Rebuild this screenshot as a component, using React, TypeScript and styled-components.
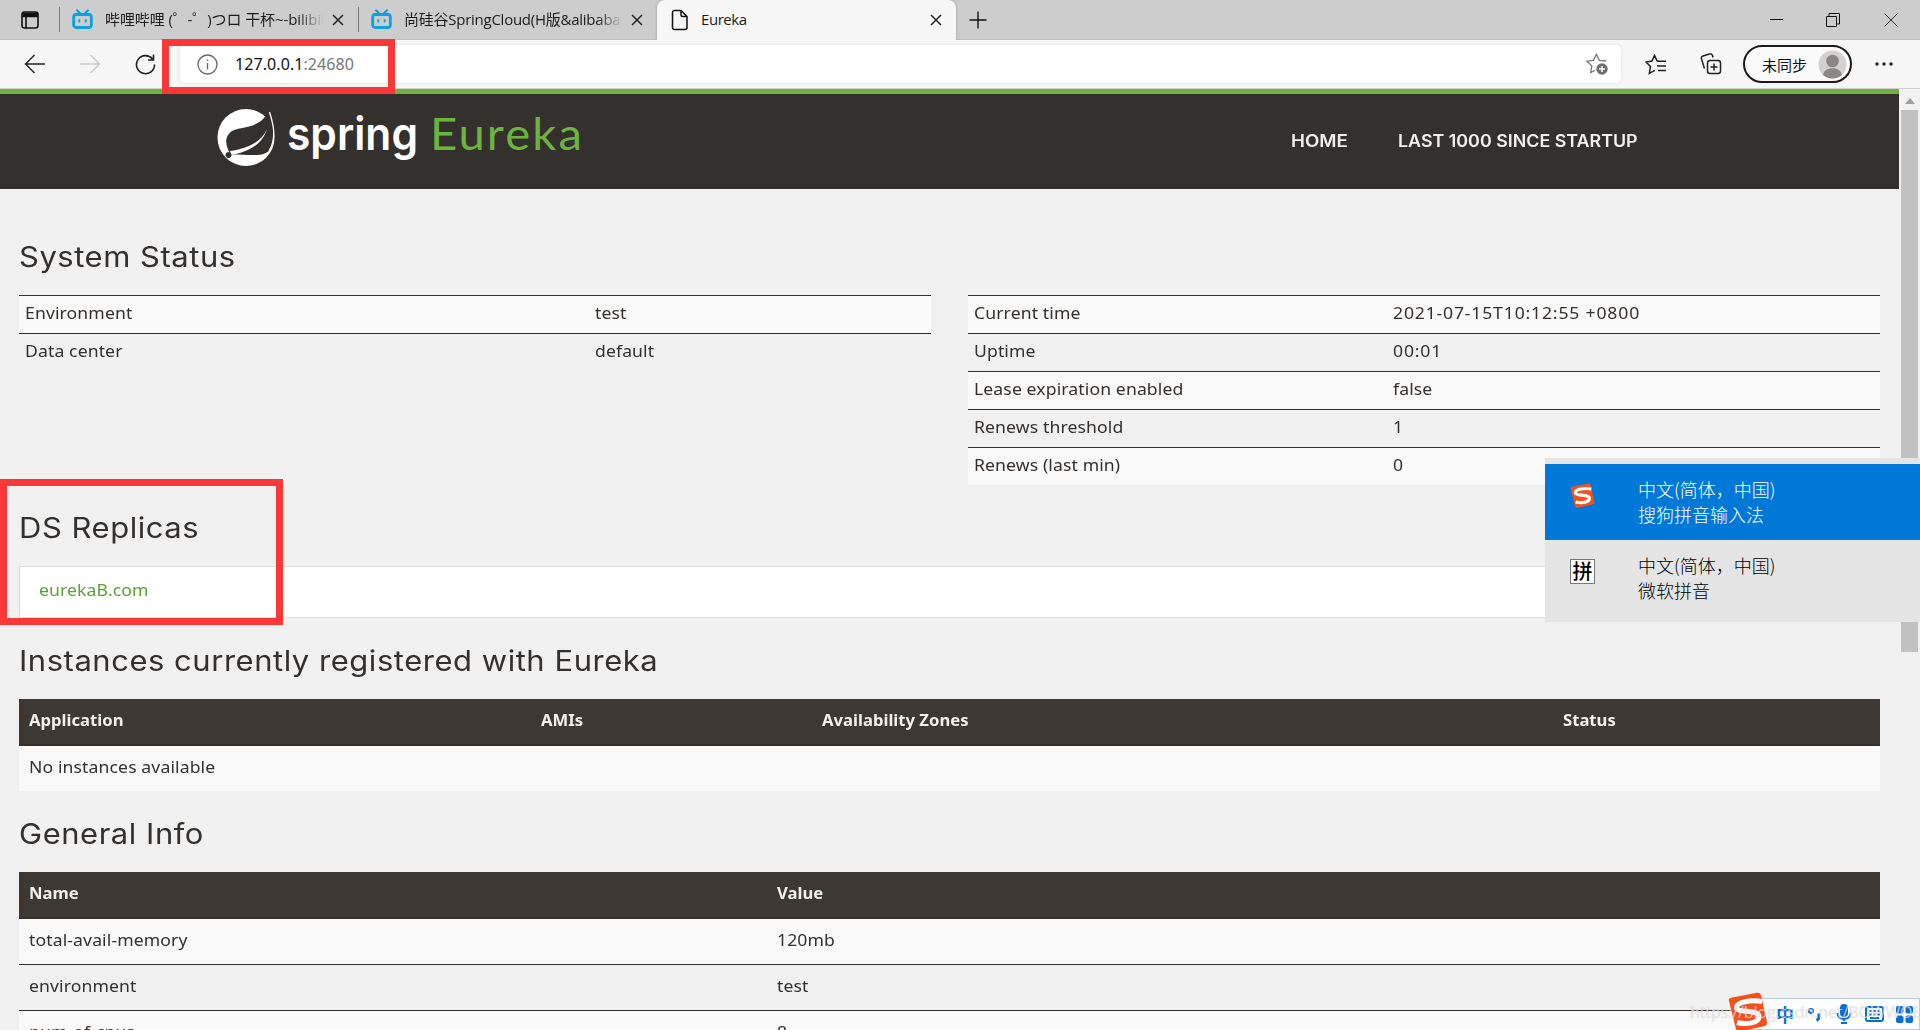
import React from "react";
import styled, { createGlobalStyle } from "styled-components";

const GlobalStyle = createGlobalStyle`
  * { box-sizing: border-box; }
  body { margin: 0; background: #f1f1f1; overflow: hidden; }
`;

const ui = `"Open Sans", "Noto Sans CJK SC", sans-serif`;
const bodyFont = `"Noto Sans", "Open Sans", sans-serif`;
const titleFont = `Inter, "Noto Sans", sans-serif`;

const Window = styled.div`
  position: relative;
  width: 1920px;
  height: 1030px;
  overflow: hidden;
  display: flex;
  flex-direction: column;
  background: #f1f1f1;
  color: #34302d;
  font-family: ${bodyFont};
`;

/* ---------- browser chrome ---------- */
const TabStrip = styled.div`
  height: 40px;
  flex: none;
  display: flex;
  align-items: center;
  background: #cdcdcd;
  border-bottom: 1px solid #bdbdbd;
  font: 15px ${ui};
  color: #1b1b1b;
`;
const StripIcon = styled.div<{ $w: number }>`
  width: ${(p) => p.$w}px;
  display: flex;
  justify-content: center;
`;
const Tab = styled.div<{ $active?: boolean; $w: number }>`
  width: ${(p) => p.$w}px;
  height: 40px;
  padding: 0 14px 0 ${(p) => (p.$active ? 14 : 12)}px;
  display: flex;
  align-items: center;
  background: ${(p) => (p.$active ? "#f7f7f7" : "transparent")};
  border-radius: ${(p) => (p.$active ? "8px 8px 0 0" : "0")};
  box-shadow: ${(p) => (p.$active ? "0 0 3px rgba(0,0,0,.25)" : "none")};
`;
const Divider = styled.div`
  width: 1px;
  height: 25px;
  background: #7d7d7d;
`;
const TabTitle = styled.div<{ $ls?: number; $fade?: boolean }>`
  flex: 1;
  min-width: 0;
  height: 24px;
  line-height: 22px;
  margin: 0 8px 0 12px;
  overflow: hidden;
  white-space: pre;
  letter-spacing: ${(p) => p.$ls ?? -0.45}px;
  ${(p) => p.$fade && `-webkit-mask-image: linear-gradient(90deg, #000 88%, transparent);`}
`;
const Controls = styled.div`
  margin-left: auto;
  width: 172px;
  height: 37px;
  display: flex;
  align-items: center;
  justify-content: space-around;
`;
const Toolbar = styled.div`
  height: 49px;
  flex: none;
  display: flex;
  align-items: center;
  background: #f7f7f7;
  border-bottom: 1px solid #cfcfcf;
  padding-left: 8px;
`;
const ToolButton = styled.div<{ $w: number }>`
  width: ${(p) => p.$w}px;
  flex: none;
  display: flex;
  justify-content: center;
`;
const Address = styled.div`
  width: 1441px;
  height: 38px;
  margin-left: 7px;
  padding: 0 13px 0 17px;
  display: flex;
  align-items: center;
  background: #fff;
  border-radius: 5px;
  box-shadow: 0 0 4px rgba(0, 0, 0, 0.09);
`;
const Url = styled.div`
  flex: 1;
  margin-left: 17px;
  font: 16px ${bodyFont};
  letter-spacing: 0.08px;
  color: #111;
  span { color: #767676; }
`;
const Profile = styled.div`
  width: 109px;
  height: 38px;
  margin: 0 8px 0 11px;
  padding: 0 3px 0 17px;
  display: flex;
  align-items: center;
  justify-content: space-between;
  border: 2px solid #1b1b1b;
  border-radius: 19px;
  background: #fbfbfb;
  font: 15px ${ui};
  color: #111;
`;

/* ---------- page ---------- */
const Viewport = styled.div`
  flex: 1;
  min-height: 0;
  display: flex;
`;
const Page = styled.div`
  width: 1899px;
  overflow: hidden;
`;
const Scrollbar = styled.div`
  width: 21px;
  display: flex;
  flex-direction: column;
  align-items: center;
  background: #f1f1f1;
  padding-top: 9px;
`;
const Thumb = styled.div`
  width: 17px;
  height: 542px;
  margin-top: 6px;
  background: #c1c1c1;
`;
const Header = styled.header`
  height: 100px;
  border-top: 5px solid #6db33f;
  background: #34302d;
  display: flex;
`;
const LogoBox = styled.div`
  width: 400px;
  margin-left: 200px;
`;
const Nav = styled.nav`
  display: flex;
  gap: 55px;
  margin-left: 691px;
  padding-top: 35px;
  font: 600 17px/24px ${titleFont};
  color: #f1f1f1;
`;
const NavLink = styled.a<{ $stretch: number }>`
  transform: scaleX(${(p) => p.$stretch});
  transform-origin: left;
  white-space: nowrap;
`;
const Content = styled.main`
  padding: 0 19px;
`;
const Title = styled.h1<{ $top?: number }>`
  margin: ${(p) => p.$top ?? 27}px 0 22px;
  font: 400 28px/32px ${titleFont};
  letter-spacing: 0.5px;
  white-space: nowrap;
  transform: scaleX(1.105);
  transform-origin: left;
`;
const Columns = styled.div`
  display: grid;
  grid-template-columns: 912px 912px;
  gap: 37px;
  align-items: start;
`;
const StatusTable = styled.div`
  border-top: 1px solid #34302d;
`;
const StatusRow = styled.div<{ $col: number }>`
  height: 38px;
  display: grid;
  grid-template-columns: ${(p) => p.$col}px 1fr;
  padding-left: 6px;
  font-size: 16px;
  line-height: 35px;
  border-bottom: 1px solid #34302d;
  &:nth-child(odd) { background: #f9f9f9; }
  &:last-child { border-bottom: 0; height: 37px; }
`;
const Text = styled.span<{ $ls?: number; $stretch?: number }>`
  display: block;
  justify-self: start;
  letter-spacing: ${(p) => p.$ls ?? 0.1}px;
  white-space: nowrap;
  transform: scaleX(${(p) => p.$stretch ?? 1.1});
  transform-origin: left;
`;
const List = styled.div`
  height: 52px;
  padding-left: 19px;
  border: 1px solid #ddd;
  background: #fff;
  font-size: 16px;
  line-height: 46px;
  color: #5fa134;
`;
const Table = styled.div<{ $cols: string }>`
  & > div {
    display: grid;
    grid-template-columns: ${(p) => p.$cols};
    padding-left: 10px;
  }
`;
const HeadRow = styled.div`
  height: 47px;
  background: #3d3833;
  border-bottom: 2px solid #34302d;
  color: #f1f1f1;
  font-weight: 700;
  font-size: 16px;
  line-height: 43px;
`;
const DataRow = styled.div<{ $line?: boolean; $alt?: boolean }>`
  height: ${(p) => (p.$line ? 46 : 45)}px;
  background: ${(p) => (p.$alt ? "#f1f1f1" : "#f9f9f9")};
  border-bottom: ${(p) => (p.$line ? "1px solid #34302d" : "0")};
  font-size: 16px;
  line-height: 43px;
`;

/* ---------- overlays ---------- */
const Marker = styled.div<{ $x: number; $y: number; $w: number; $h: number }>`
  position: absolute;
  left: ${(p) => p.$x}px;
  top: ${(p) => p.$y}px;
  width: ${(p) => p.$w}px;
  height: ${(p) => p.$h}px;
  border: 7px solid #fb3838;
`;
const ImeMenu = styled.div`
  position: absolute;
  left: 1545px;
  top: 458px;
  width: 375px;
  height: 164px;
  padding-top: 6px;
  background: #e5e5e5;
`;
const ImeItem = styled.div<{ $on?: boolean }>`
  height: 76px;
  padding: 13px 0 0 25px;
  display: flex;
  gap: 43px;
  background: ${(p) => (p.$on ? "#0078d7" : "transparent")};
  color: ${(p) => (p.$on ? "#fff" : "#000")};
  font: 300 18px/25px "Noto Sans CJK SC", sans-serif;
  svg { margin-top: 6px; }
`;
const PinyinIcon = styled.div`
  width: 25px;
  height: 25px;
  margin-top: 6px;
  border: 1px solid #777;
  background: #fff;
  font: 500 20px/21px "Noto Sans CJK SC", sans-serif;
  text-align: center;
`;
const ImeBar = styled.div`
  position: absolute;
  left: 1740px;
  top: 998px;
  width: 180px;
  height: 32px;
  padding-left: 29px;
  display: flex;
  align-items: center;
  border: 1px solid #b9cbe6;
  background: #fff;
`;
const ImeLogo = styled.div`
  position: absolute;
  left: 1728px;
  top: 992px;
`;
const ImeCell = styled.div`
  width: 30px;
  display: flex;
  justify-content: center;
  color: #0b6cd6;
  font: 700 18px/24px "Noto Sans CJK SC", sans-serif;
`;
const Watermark = styled.div`
  position: absolute;
  left: 1690px;
  top: 1001px;
  font: 16px/22px ${ui};
  color: rgba(255, 255, 255, 0.6);
  text-shadow: 0 0 1px rgba(120, 120, 120, 0.45);
  letter-spacing: -0.1px;
  white-space: nowrap;
`;

const Close = () => (
  <svg width="12" height="12" viewBox="0 0 12 12" stroke="#222" strokeWidth="1.5"><path d="M1 1l10 10M11 1L1 11" /></svg>
);
const Bili = () => (
  <svg width="21" height="23" viewBox="0 -1 21 22" fill="none" stroke="#0ba2de" strokeLinecap="round">
    <rect x="1.7" y="5" width="17.6" height="13" rx="2.5" strokeWidth="2.8" />
    <path d="M5 .8l3 3M16 .8l-3 3" strokeWidth="2.2" />
    <path d="M7.3 10.500v1.500M13.7 10.500v1.500" strokeWidth="2" />
  </svg>
);
const SogouIcon = ({ size }: { size: number }) => (
  <svg width={size} height={size} viewBox="0 0 40 40">
    <path d="M1 9Q0 6.500 3 5.800L29 .8Q32 .3 33 3L39 30Q39.800 33 37 34L12 39.500Q9 40 8 37Z" fill="#f4511e" />
    <path d="M34 9.500C23 7.500 8.500 10 8.500 15.500C8.500 21.500 31 17 31 24.500C31 31 19 33 9 30.500" fill="none" stroke="#fff" strokeWidth="5" />
  </svg>
);

const Logo = () => (
  <svg width="400" height="95" viewBox="0 0 400 95">
    <circle cx="46" cy="43.500" r="28.500" fill="#fff" />
    <path d="M69 17C74 29 75.500 44 71 54C66 63 56 61 31 60.500C25 53 24 42 32 37C40 32 59 36 69 17Z" fill="#34302d" />
    <path d="M69.500 18C74 32 76.500 45 69 57" stroke="#fff" strokeWidth="1.300" fill="none" />
    <path d="M31 61C48 58 62 51 67 35C62 47 48 55 30 57Z" fill="#fff" />
    <circle cx="28.500" cy="61" r="2.600" fill="#34302d" stroke="#34302d" strokeWidth="1" />
    <text x="87" y="56" fill="#fff" fontFamily="Inter" fontWeight="600" fontSize="46" textLength="131" lengthAdjust="spacingAndGlyphs">spring</text>
    <text x="230" y="56" fill="#6db33f" fontFamily="Lato" fontWeight="400" fontSize="44" letterSpacing="2" textLength="154" lengthAdjust="spacingAndGlyphs">Eureka</text>
  </svg>
);

const left = [["Environment", "test"], ["Data center", "default"]];
const right: [string, string, number?][] = [
  ["Current time", "2021-07-15T10:12:55 +0800", 0.75],
  ["Uptime", "00:01", 0.75],
  ["Lease expiration enabled", "false"],
  ["Renews threshold", "1"],
  ["Renews (last min)", "0"],
];
const info = [["total-avail-memory", "120mb"], ["environment", "test"], ["num-of-cpus", "8"]];

export default function App() {
  return (
    <Window>
      <GlobalStyle />
      <TabStrip>
        <StripIcon $w={59}>
          <svg width="18" height="18" viewBox="0 0 18 18" fill="none" stroke="#111" strokeWidth="1.600">
            <rect x="1" y="1" width="16" height="16" rx="2.500" /><path d="M1 4h16" strokeWidth="4.500" /><path d="M5 5v12" />
          </svg>
        </StripIcon>
        <Divider />
        <Tab $w={298}><Bili /><TabTitle $fade $ls={-0.1}>哔哩哔哩 (゜-゜)つロ 干杯~-bilibili</TabTitle><Close /></Tab>
        <Divider />
        <Tab $w={298}><Bili /><TabTitle $fade $ls={-0.25}>尚硅谷SpringCloud(H版&amp;alibaba)</TabTitle><Close /></Tab>
        <Tab $w={299} $active>
          <svg width="18" height="22" viewBox="0 0 18 22" fill="none" stroke="#111" strokeWidth="1.500">
            <path d="M3.500 1.500H10L16 7.500V18.500a2 2 0 0 1-2 2H3.500a2 2 0 0 1-2-2V3.500a2 2 0 0 1 2-2ZM10 1.500V6a1.500 1.500 0 0 0 1.500 1.500H16" />
          </svg>
          <TabTitle>Eureka</TabTitle><Close />
        </Tab>
        <StripIcon $w={44}>
          <svg width="18" height="18" viewBox="0 0 18 18" stroke="#111" strokeWidth="1.400"><path d="M9 .5v17M.5 9h17" /></svg>
        </StripIcon>
        <Controls>
          <svg width="13" height="13" stroke="#111"><path d="M0 6.500h13" /></svg>
          <svg width="14" height="14" fill="none" stroke="#111"><path d="M.5 3.500h10v10H.5zM3 3.500V.5h10.500v10.500H11" /></svg>
          <svg width="14" height="14" stroke="#333"><path d="M.5 .5l13 13M13.500 .5l-13 13" /></svg>
        </Controls>
      </TabStrip>

      <Toolbar>
        <ToolButton $w={54}>
          <svg width="22" height="20" viewBox="0 0 22 20" fill="none" stroke="#222" strokeWidth="1.500"><path d="M10.500 1L1.500 10l9 9M1.500 10H21" /></svg>
        </ToolButton>
        <ToolButton $w={56}>
          <svg width="22" height="20" viewBox="0 0 22 20" fill="none" stroke="#ccc" strokeWidth="1.500"><path d="M11.500 1L20.500 10l-9 9M20.500 10H1" /></svg>
        </ToolButton>
        <ToolButton $w={55}>
          <svg width="21" height="21" viewBox="0 0 21 21" fill="none" stroke="#222" strokeWidth="1.600"><path d="M17.500 5A9 9 0 1 0 19.500 10.500M18.500 .5V6H13" /></svg>
        </ToolButton>
        <Address>
          <svg width="21" height="21" viewBox="0 0 21 21" fill="none" stroke="#666" strokeWidth="1.300"><circle cx="10.500" cy="10.500" r="9.500" /><path d="M10.500 9v6.500M10.500 5.500v1.600" /></svg>
          <Url>127.0.0.1<span>:24680</span></Url>
          <svg width="22" height="22" viewBox="0 0 22 22" fill="none" stroke="#777" strokeWidth="1.300">
            <path d="M20 8L13.300 7.300 10.400 1.300 7.500 7.300 1 8.200l4.800 4.700L4.700 19.500 9 17.200" />
            <circle cx="16" cy="16" r="5.700" fill="#6e6e6e" stroke="none" /><path d="M16 13v6M13 16h6" stroke="#fff" strokeWidth="1.500" />
          </svg>
        </Address>
        <ToolButton $w={69}>
          <svg width="22" height="21" viewBox="0 0 22 21" fill="none" stroke="#222" strokeWidth="1.500">
            <path d="M14 7.200L12 6.800 9.500 1.300 7 7 1 8l4.500 4.500L4.300 19.300 9.800 16.300M13 7.300h8M12 12h9M13 16.500h8" />
          </svg>
        </ToolButton>
        <ToolButton $w={42}>
          <svg width="22" height="22" viewBox="0 0 22 22" fill="none" stroke="#222" strokeWidth="1.500">
            <rect x="7.500" y="7.500" width="13" height="13" rx="2.500" /><path d="M14 10.500v7M10.500 14h7M4.500 15.500L1.500 6a2.300 2.300 0 0 1 1.500-3L9.500 1a2.300 2.300 0 0 1 3 1.500L13 4.500" />
          </svg>
        </ToolButton>
        <Profile>
          未同步
          <svg width="29" height="29" viewBox="0 0 29 29"><circle cx="14.500" cy="14.500" r="14" fill="#d4d1ce" /><circle cx="14.500" cy="11" r="6.300" fill="#8a8785" /><path d="M5 25c1-9 18-9 19 0-5 4.500-14 4.500-19 0Z" fill="#8a8785" /></svg>
        </Profile>
        <ToolButton $w={48}>
          <svg width="18" height="4" fill="#222"><circle cx="2" cy="2" r="1.700" /><circle cx="9" cy="2" r="1.700" /><circle cx="16" cy="2" r="1.700" /></svg>
        </ToolButton>
      </Toolbar>

      <Viewport>
        <Page>
          <Header>
            <LogoBox><Logo /></LogoBox>
            <Nav><NavLink $stretch={1.1}>HOME</NavLink><NavLink $stretch={1.05}>LAST 1000 SINCE STARTUP</NavLink></Nav>
          </Header>
          <Content>
            <Title $top={52}>System Status</Title>
            <Columns>
              <StatusTable>
                {left.map(([a, b]) => <StatusRow key={a} $col={570}><Text>{a}</Text><Text>{b}</Text></StatusRow>)}
              </StatusTable>
              <StatusTable>
                {right.map(([a, b, ls]) => <StatusRow key={a} $col={419}><Text>{a}</Text><Text $ls={ls}>{b}</Text></StatusRow>)}
              </StatusTable>
            </Columns>
            <Title>DS Replicas</Title>
            <List><Text>eurekaB.com</Text></List>
            <Title>Instances currently registered with Eureka</Title>
            <Table $cols="512px 281px 741px 1fr">
              <HeadRow>
                {["Application", "AMIs", "Availability Zones", "Status"].map((h) => <Text key={h} $ls={0} $stretch={1.04}>{h}</Text>)}
              </HeadRow>
              <DataRow><Text>No instances available</Text></DataRow>
            </Table>
            <Title>General Info</Title>
            <Table $cols="748px 1fr">
              <HeadRow><Text $ls={0} $stretch={1.04}>Name</Text><Text $ls={0} $stretch={1.04}>Value</Text></HeadRow>
              {info.map(([a, b], i) => <DataRow key={a} $line $alt={i % 2 === 1}><Text>{a}</Text><Text>{b}</Text></DataRow>)}
            </Table>
          </Content>
        </Page>
        <Scrollbar>
          <svg width="10" height="6" fill="#a0a0a0"><path d="M5 0l5 6H0z" /></svg>
          <Thumb />
        </Scrollbar>
      </Viewport>

      <Marker $x={162} $y={39} $w={233} $h={55} />
      <Marker $x={0} $y={479} $w={283} $h={146} />
      <ImeMenu>
        <ImeItem $on><SogouIcon size={25} /><div>中文(简体，中国)<br />搜狗拼音输入法</div></ImeItem>
        <ImeItem><PinyinIcon>拼</PinyinIcon><div>中文(简体，中国)<br />微软拼音</div></ImeItem>
      </ImeMenu>
      <ImeBar>
        <ImeCell>中</ImeCell>
        <ImeCell><svg width="16" height="16" fill="none" stroke="#0b6cd6" strokeWidth="2"><circle cx="4" cy="5" r="2" /><path d="M12 7.500v3.500q0 2-2.500 3.500" strokeWidth="3" /></svg></ImeCell>
        <ImeCell><svg width="16" height="20" viewBox="0 0 16 20" fill="none" stroke="#0b6cd6" strokeWidth="2"><rect x="5" y="1" width="6" height="11" rx="3" fill="#0b6cd6" /><path d="M1.500 9c0 8 13 8 13 0M8 15v2M5 19h6" /></svg></ImeCell>
        <ImeCell><svg width="19" height="16" viewBox="0 0 19 16" fill="none" stroke="#0b6cd6" strokeWidth="2"><rect x="1" y="1" width="17" height="14" rx="2" /><path d="M4 5h11M4 8.500h11" strokeDasharray="2.500 1.700" /><path d="M5 12h9" /></svg></ImeCell>
        <ImeCell><svg width="17" height="17" viewBox="0 0 17 17" fill="#0b6cd6"><rect width="7.500" height="7.500" rx="2" /><rect x="9.500" width="7.500" height="7.500" rx="2" /><rect y="9.500" width="7.500" height="7.500" rx="2" /><rect x="9.500" y="9.500" width="7.500" height="7.500" rx="2" /></svg></ImeCell>
      </ImeBar>
      <ImeLogo><SogouIcon size={40} /></ImeLogo>
      <Watermark>https://blog.csdn.net/BOWWOB</Watermark>
    </Window>
  );
}
